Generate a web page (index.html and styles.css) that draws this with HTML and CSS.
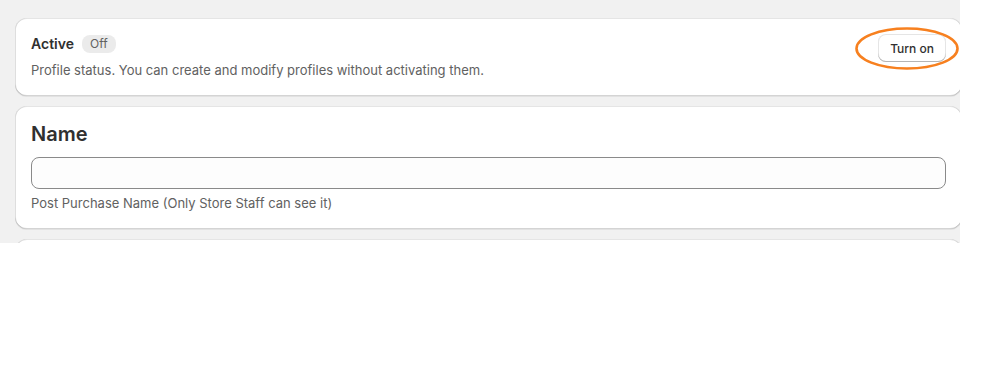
FILE: index.html
```html
<!DOCTYPE html>
<html lang="en">
<head>
    <meta charset="UTF-8">
    <meta name="viewport" content="width=device-width, initial-scale=1.0">
    <title>Post Purchase Profile</title>
    <link rel="stylesheet" href="styles.css">
</head>
<body>
    <div class="page-frame">
        <div class="page-content">
            <div class="card card-status">
                <div class="status-text">
                    <div class="status-title">
                        <span class="status-label">Active</span>
                        <span class="badge">Off</span>
                    </div>
                    <p class="help-text">Profile status. You can create and modify profiles without activating them.</p>
                </div>
                <div class="status-action">
                    <button class="btn">Turn on</button>
                    <svg class="highlight" width="106" height="45" viewBox="0 0 106 45">
                        <ellipse cx="53" cy="22.5" rx="50.5" ry="20" fill="none" stroke="#f7801f" stroke-width="2.6"/>
                    </svg>
                </div>
            </div>

            <div class="card">
                <h2 class="card-heading">Name</h2>
                <input class="text-field" type="text">
                <p class="help-text help-under">Post Purchase Name (Only Store Staff can see it)</p>
            </div>

            <div class="card card-empty"></div>
        </div>
    </div>
</body>
</html>
```

FILE: styles.css
```css
* {
    margin: 0;
    padding: 0;
    box-sizing: border-box;
}

body {
    font-family: Inter, "Noto Sans", "Liberation Sans", sans-serif;
    background: #fff;
    color: #303030;
    font-size: 13px;
}

.page-frame {
    width: 960px;
    height: 243px;
    background: #f1f1f1;
    overflow: hidden;
}

.page-content {
    padding: 18px 0 0 15px;
    display: flex;
    flex-direction: column;
    gap: 10px;
}

.card {
    width: 947px;
    background: #fff;
    border-radius: 12px;
    padding: 16px;
    box-shadow: 0 1px 0 0 rgba(26, 26, 26, 0.07),
        inset 0 1px 0 0 rgba(204, 204, 204, 0.5),
        inset 0 -1px 0 0 rgba(0, 0, 0, 0.17),
        inset -1px 0 0 0 rgba(0, 0, 0, 0.13),
        inset 1px 0 0 0 rgba(0, 0, 0, 0.13);
}

.card-status {
    display: flex;
    justify-content: space-between;
    align-items: flex-start;
}

.status-text {
    display: flex;
    flex-direction: column;
    gap: 6px;
}

.status-title {
    display: flex;
    align-items: center;
    gap: 8px;
    height: 20px;
}

.status-label {
    font-size: 14px;
    font-weight: 600;
    line-height: 20px;
}

.badge {
    background: #ebebeb;
    color: #616161;
    font-size: 12px;
    line-height: 18px;
    padding: 0 8px;
    border-radius: 8px;
}

.help-text {
    color: #616161;
    font-size: 13px;
    line-height: 20px;
}

.status-action {
    position: relative;
}

.btn {
    font-family: inherit;
    font-size: 12px;
    font-weight: 500;
    color: #303030;
    background: #fff;
    border: none;
    border-radius: 8px;
    height: 28px;
    padding: 0 12px;
    cursor: pointer;
    box-shadow: inset 0 -1px 0 0 #b5b5b5,
        inset 0 0 0 1px rgba(0, 0, 0, 0.1),
        inset 0 0.5px 0 1.5px #fff;
}

.highlight {
    position: absolute;
    left: -24px;
    top: -8px;
}

.card-heading {
    font-size: 20px;
    font-weight: 600;
    line-height: 24px;
    margin-bottom: 11px;
}

.text-field {
    display: block;
    width: 100%;
    height: 32px;
    border: 1px solid #8a8a8a;
    border-radius: 8px;
    background: #fdfdfd;
    font-family: inherit;
    font-size: 13px;
    padding: 0 12px;
}

.help-under {
    margin-top: 4px;
}

.card-empty {
    height: 60px;
}
```
